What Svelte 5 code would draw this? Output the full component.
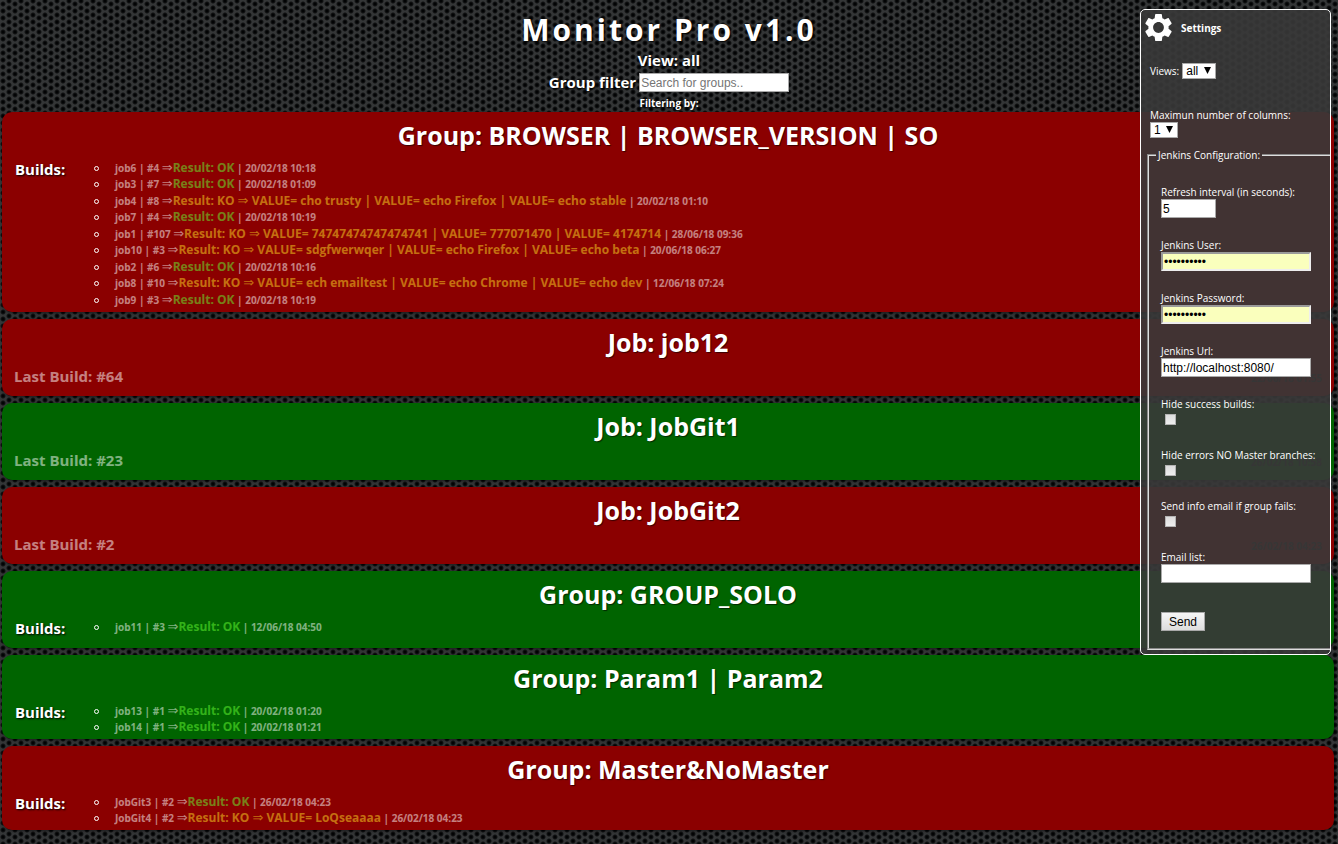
<script>
  const ok = 'Result: OK';
  const cards = [
    {
      type: 'Group', name: 'BROWSER | BROWSER_VERSION | SO', state: 'fail',
      builds: [
        { job: 'job6', n: 4, date: '20/02/18 10:18' },
        { job: 'job3', n: 7, date: '20/02/18 01:09' },
        { job: 'job4', n: 8, values: 'VALUE= cho trusty | VALUE= echo Firefox | VALUE= echo stable', date: '20/02/18 01:10' },
        { job: 'job7', n: 4, date: '20/02/18 10:19' },
        { job: 'job1', n: 107, values: 'VALUE= 74747474747474741 | VALUE= 777071470 | VALUE= 4174714', date: '28/06/18 09:36' },
        { job: 'job10', n: 3, values: 'VALUE= sdgfwerwqer | VALUE= echo Firefox | VALUE= echo beta', date: '20/06/18 06:27' },
        { job: 'job2', n: 6, date: '20/02/18 10:16' },
        { job: 'job8', n: 10, values: 'VALUE= ech emailtest | VALUE= echo Chrome | VALUE= echo dev', date: '12/06/18 07:24' },
        { job: 'job9', n: 3, date: '20/02/18 10:19' }
      ]
    },
    { type: 'Job', name: 'job12', state: 'fail', last: 64, date: '22/06/18 01:55' },
    { type: 'Job', name: 'JobGit1', state: 'pass', last: 23, date: '26/02/18 10:58' },
    { type: 'Job', name: 'JobGit2', state: 'fail', last: 2, date: '26/02/18 04:23' },
    { type: 'Group', name: 'GROUP_SOLO', state: 'pass', builds: [{ job: 'job11', n: 3, date: '12/06/18 04:50' }] },
    {
      type: 'Group', name: 'Param1 | Param2', state: 'pass',
      builds: [
        { job: 'job13', n: 1, date: '20/02/18 01:20' },
        { job: 'job14', n: 1, date: '20/02/18 01:21' }
      ]
    },
    {
      type: 'Group', name: 'Master&NoMaster', state: 'fail',
      builds: [
        { job: 'JobGit3', n: 2, date: '26/02/18 04:23' },
        { job: 'JobGit4', n: 2, values: 'VALUE= LoQseaaaa', date: '26/02/18 04:23' }
      ]
    }
  ];
</script>

<header>
  <h1>Monitor Pro v1.0</h1>
  <h2>View: all</h2>
  <div class="filter">
    <label for="group-filter">Group filter</label>
    <input id="group-filter" type="text" placeholder="Search for groups.." />
  </div>
  <p>Filtering by:</p>
</header>

<main>
  {#each cards as card}
    <section class={card.state}>
      <h3>{card.type}: {card.name}</h3>
      {#if card.builds}
        <div class="builds">
          <h4>Builds:</h4>
          <ul>
            {#each card.builds as b}
              <li><span class="meta">{b.job} | #{b.n} <span class="arrow">⇒</span><span class="result" class:ko={b.values}>{#if b.values}Result: KO <span class="arrow">⇒</span> {b.values}{:else}{ok}{/if}</span> | {b.date}</span></li>
            {/each}
          </ul>
        </div>
      {:else}
        <div class="last">
          <span class="number">Last Build: #{card.last}</span>
          <time>{card.date}</time>
        </div>
      {/if}
    </section>
  {/each}
</main>

<aside>
  <div class="title">
    <svg viewBox="2 2 20 20" aria-hidden="true"><path fill="#fff" d="M19.43 12.98c.04-.32.07-.64.07-.98s-.03-.66-.07-.98l2.11-1.65c.19-.15.24-.42.12-.64l-2-3.46c-.12-.22-.39-.3-.61-.22l-2.49 1c-.52-.4-1.08-.73-1.69-.98l-.38-2.65C14.46 2.18 14.25 2 14 2h-4c-.25 0-.46.18-.49.42l-.38 2.65c-.61.25-1.17.59-1.69.98l-2.49-1c-.23-.09-.49 0-.61.22l-2 3.46c-.13.22-.07.49.12.64l2.11 1.65c-.04.32-.07.65-.07.98s.03.66.07.98l-2.11 1.65c-.19.15-.24.42-.12.64l2 3.46c.12.22.39.3.61.22l2.49-1c.52.4 1.08.73 1.69.98l.38 2.65c.03.24.24.42.49.42h4c.25 0 .46-.18.49-.42l.38-2.65c.61-.25 1.17-.59 1.69-.98l2.49 1c.23.09.49 0 .61-.22l2-3.46c.12-.22.07-.49-.12-.64l-2.11-1.65zM12 16c-2.2 0-4-1.800-4-4s1.800-4 4-4 4 1.800 4 4-1.800 4-4 4z" /></svg>
    <strong>Settings</strong>
  </div>
  <div class="views">
    <label for="views">Views:</label>
    <span class="select">
      <select id="views"><option>all</option></select>
      <svg viewBox="0 0 7 7" aria-hidden="true"><path d="M0 0h7L3.500 7z" /></svg>
    </span>
  </div>
  <div class="columns">
    <label for="columns">Maximun number of columns:</label>
    <span class="select">
      <select id="columns"><option>1</option></select>
      <svg viewBox="0 0 7 7" aria-hidden="true"><path d="M0 0h7L3.500 7z" /></svg>
    </span>
  </div>
  <fieldset>
    <legend>Jenkins Configuration:</legend>
    <div class="field"><label for="refresh">Refresh interval (in seconds):</label><input id="refresh" class="short" type="text" value="5" /></div>
    <div class="field"><label for="user">Jenkins User:</label><input id="user" class="filled" type="password" value="jenkinsusr" /></div>
    <div class="field"><label for="password">Jenkins Password:</label><input id="password" class="filled" type="password" value="jenkinspwd" /></div>
    <div class="field"><label for="url">Jenkins Url:</label><input id="url" type="text" value="http://localhost:8080/" /></div>
    <div class="field"><label for="hide-ok">Hide success builds:</label><input id="hide-ok" type="checkbox" /></div>
    <div class="field"><label for="hide-branches">Hide errors NO Master branches:</label><input id="hide-branches" type="checkbox" /></div>
    <div class="field"><label for="send-mail">Send info email if group fails:</label><input id="send-mail" type="checkbox" /></div>
    <div class="field"><label for="emails">Email list:</label><input id="emails" type="text" /></div>
    <button type="button">Send</button>
  </fieldset>
</aside>

<style>
  :global(body) {
    color: #fff;
    font-family: 'Open Sans', sans-serif;
    background-color: #343637;
    background-image:
      radial-gradient(circle at 3px 4px, #020304 1px, #0b0c0dcc 2px, transparent 3px),
      radial-gradient(circle at 9px 1px, #020304 1px, #0b0c0dcc 2px, transparent 3px),
      radial-gradient(circle at 9px 8px, #020304 1px, #0b0c0dcc 2px, transparent 3px);
    background-size: 12px 7px;
  }
  *, li::before { box-sizing: border-box; }
  h1, h2, h3, h4, p, ul { margin: 0; padding: 0; }
  header {
    display: flex;
    flex-direction: column;
    align-items: center;
    padding-top: 10px;
    text-shadow: 1px 1px 2px #000;
  }
  h1 { font-size: 30px; line-height: 40px; letter-spacing: 3px; }
  h2 { font-size: 15px; line-height: 20px; }
  .filter { display: flex; align-items: center; gap: 3px; height: 25px; font-size: 15px; font-weight: 700; line-height: 18px; }
  .filter label { padding-bottom: 2px; }
  header p { font-size: 10px; line-height: 16px; font-weight: 700; }
  input, select, button { font: 12px 'Liberation Sans', sans-serif; color: #000; }
  input {
    width: 150px;
    height: 19px;
    margin: 0;
    padding: 0 1px;
    border: 1px solid #a9a9a9;
    border-radius: 0;
    background: #fff;
  }
  input::placeholder { color: #757575; }

  main { display: flex; flex-direction: column; gap: 7px; padding: 1px 4px 14px 2px; }
  section { min-height: 77px; padding: 5px 12px 4px; border-radius: 10px; box-shadow: 1px 1px 3px #0008; }
  .fail { background: #8b0000; }
  .pass { background: #006400; }
  h3 { font-size: 25px; line-height: 36px; text-align: center; text-shadow: 1px 1px 1px #0009; }
  .builds { display: grid; grid-template-columns: 101px 1fr; padding-top: 6px; }
  h4 { padding-left: 1px; font-size: 15px; line-height: 20px; text-shadow: 1px 1px 2px #000; }
  ul { list-style: none; padding-top: 1px; }
  li { position: relative; height: 16px; font-size: 12px; line-height: 16px; font-weight: 700; }
  li:nth-child(2n + 3) { margin-top: 1px; }
  li::before {
    content: '';
    position: absolute;
    left: -21px;
    top: 6px;
    width: 5px;
    height: 5px;
    border: 1px solid #fff;
    border-radius: 50%;
  }
  .meta { font-size: 10px; opacity: 0.5; }
  .result { font-size: 12px; color: #6f3; }
  .ko { color: #fd2; }
  .arrow { font-family: 'DejaVu Sans', sans-serif; font-size: 13px; font-weight: 400; line-height: 1; }
  .last { display: flex; justify-content: space-between; align-items: center; height: 32px; font-weight: 700; }
  .number { font-size: 15px; opacity: 0.5; }
  time { padding-top: 3px; font-size: 10px; color: #222; }

  aside {
    position: absolute;
    top: 9px;
    right: 7px;
    width: 191px;
    overflow: hidden;
    padding: 4px 0 4px 6px;
    border: 1px solid #fff;
    border-radius: 5px;
    background: rgba(57, 57, 57, 0.9);
    font-size: 10px;
    line-height: 14px;
  }
  .title { display: flex; align-items: center; gap: 9px; height: 27px; }
  .title svg { width: 27px; height: 27px; margin-left: -2px; }
  .views { display: flex; align-items: center; gap: 3px; margin: 22px 3px 29px; }
  .columns { display: flex; flex-direction: column; align-items: flex-start; margin: 0 3px 10px; }
  .select { position: relative; display: flex; }
  select {
    appearance: none;
    height: 16px;
    padding: 0 16px 0 3px;
    border: 1px solid #a9a9a9;
    border-radius: 0;
    background: #fff;
    line-height: 14px;
  }
  .select svg { position: absolute; right: 5px; top: 4px; width: 7px; height: 7px; pointer-events: none; }
  fieldset { margin: 0; width: 200px; padding: 23px 12px 17px; border: 2px groove #ddd; }
  legend { margin-left: -5px; padding: 0 2px; }
  .field { display: flex; flex-direction: column; align-items: flex-start; margin-bottom: 20px; }
  .short { width: 55px; }
  .filled { border: 2px inset #eee; background: #faffbd; }
  input[type='checkbox'] {
    appearance: none;
    width: 11px;
    height: 11px;
    margin: 3px 4px;
    border: 1px solid #b4b4b4;
    background: linear-gradient(#ddd, #eee);
  }
  button {
    display: block;
    height: 19px;
    margin-top: 29px;
    padding: 0 7px;
    border: 1px solid #a9a9a9;
    background: linear-gradient(#f6f6f6, #ddd);
  }
</style>
